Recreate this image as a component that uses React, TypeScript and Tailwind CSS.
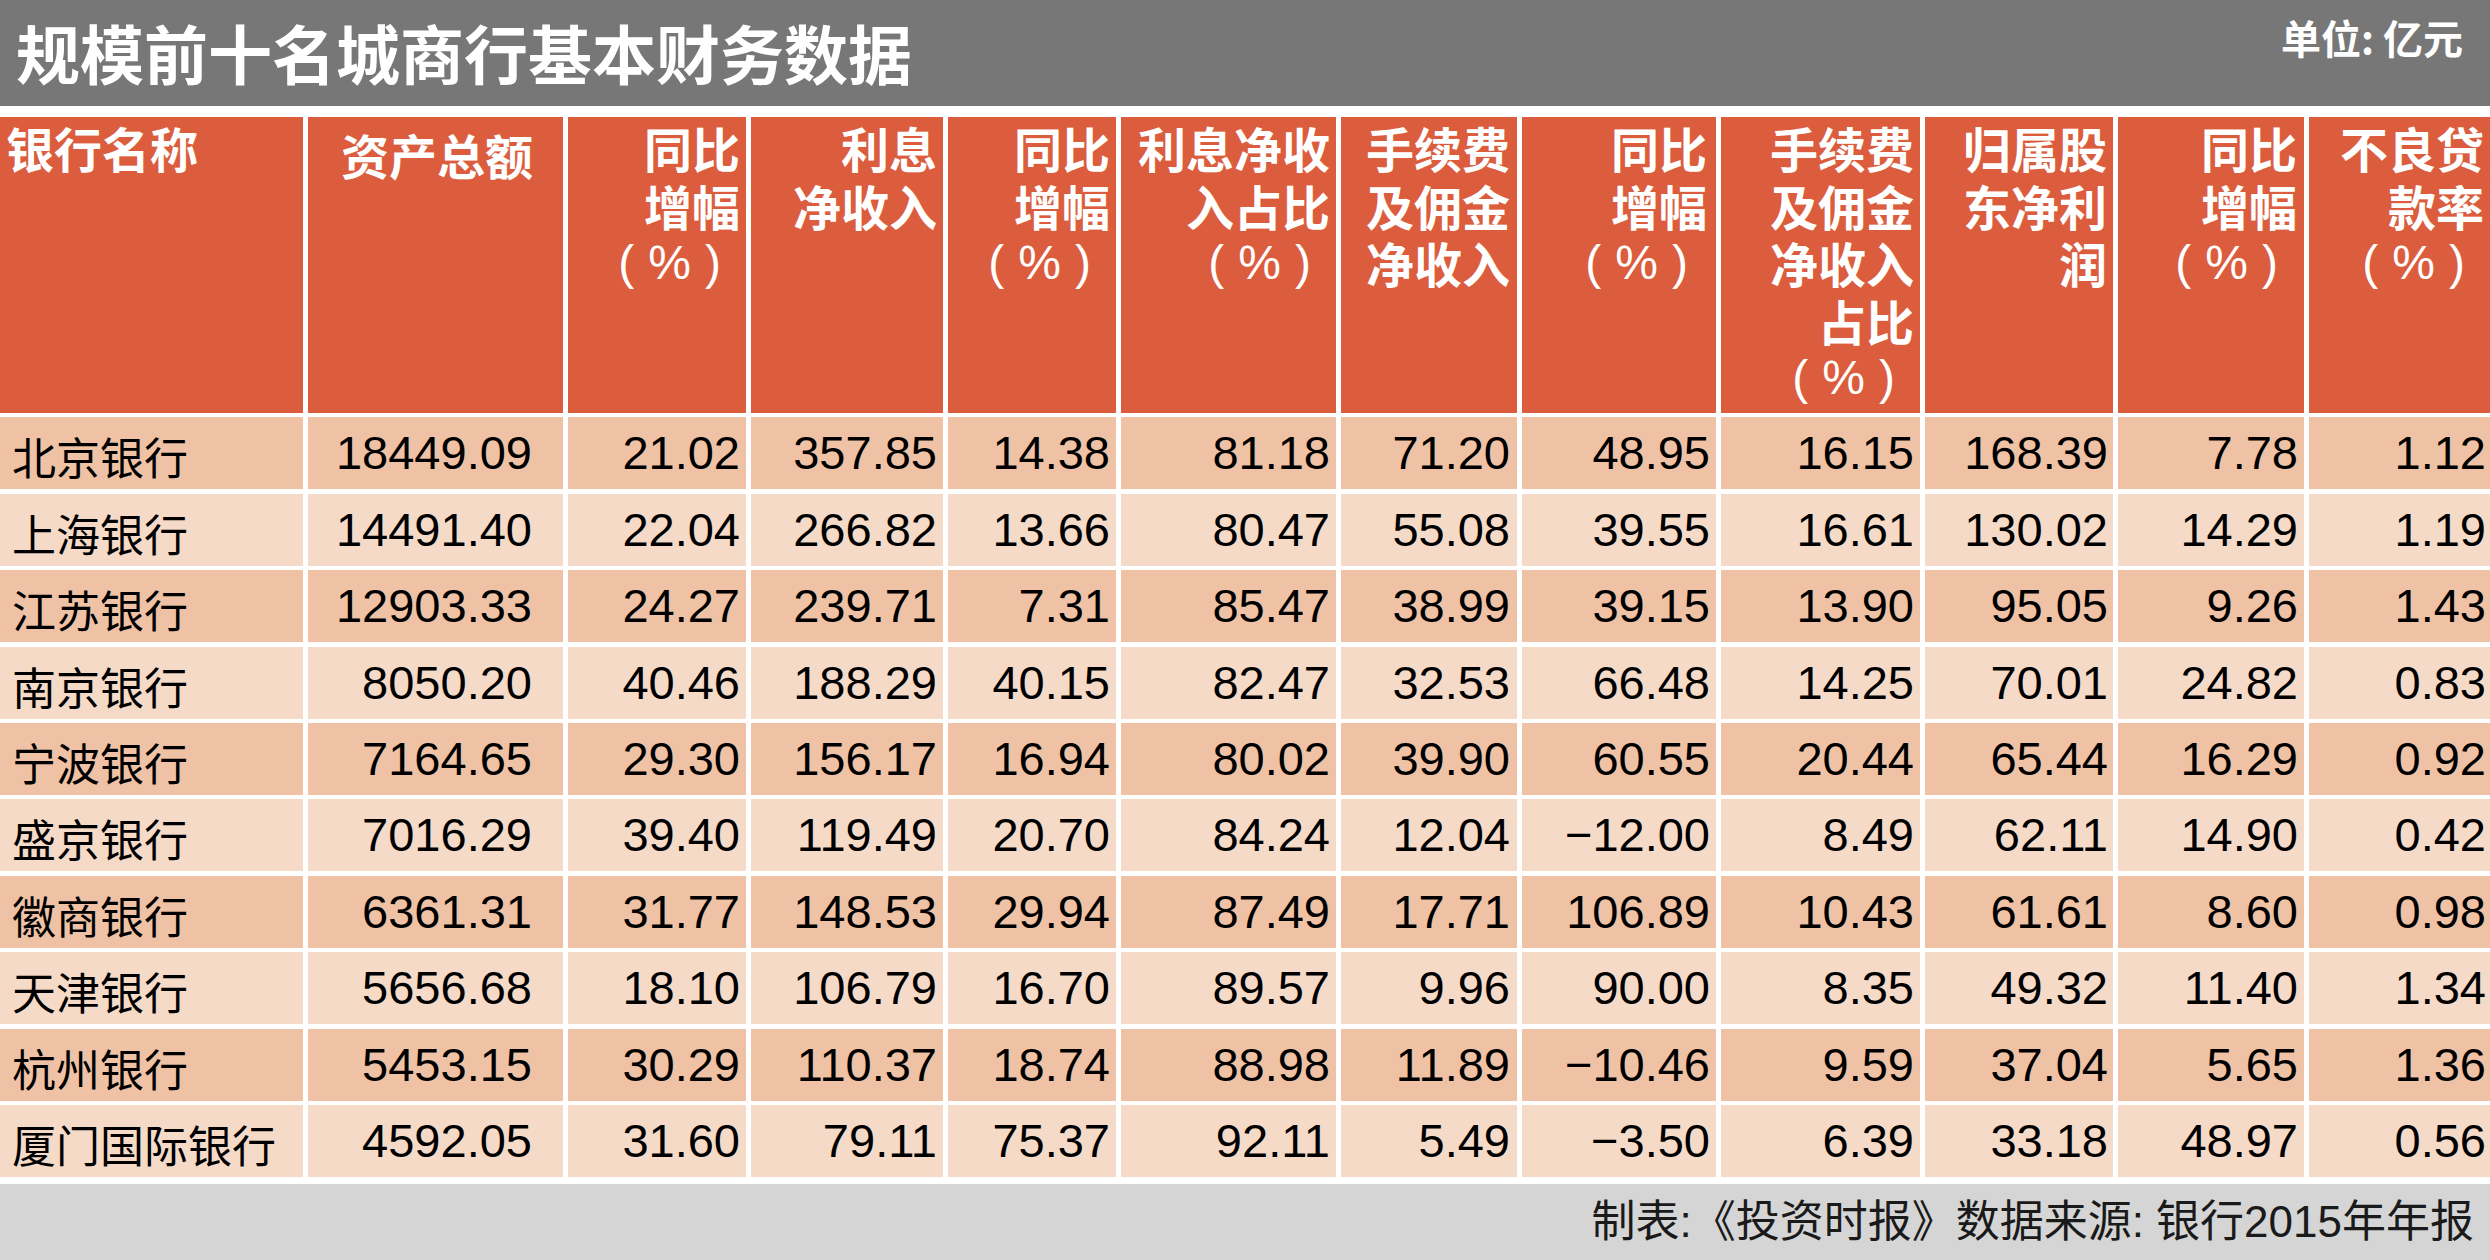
import React from "react";

type Col = {
  lines: string[];
  head: string;
  cell: string;
};

const cjk = "font-['Noto_Sans_CJK_SC',sans-serif]";
const num = "font-['Liberation_Sans','Noto_Sans_CJK_SC',sans-serif]";

// header lines + alignment per column (col 1 and col 2 are special)
const cols: Col[] = [
  { lines: ["银行名称"], head: "text-left pl-[6px] pt-[2px]", cell: "text-left pl-[12px]" },
  { lines: ["资产总额"], head: "text-right pr-[30px] pt-[9px]", cell: "text-right pr-[31px]" },
  { lines: ["同比", "增幅", "%"], head: "text-right pr-[6px] pt-[2px]", cell: "text-right pr-[6px]" },
  { lines: ["利息", "净收入"], head: "text-right pr-[6px] pt-[2px]", cell: "text-right pr-[6px]" },
  { lines: ["同比", "增幅", "%"], head: "text-right pr-[6px] pt-[2px]", cell: "text-right pr-[6px]" },
  { lines: ["利息净收", "入占比", "%"], head: "text-right pr-[6px] pt-[2px]", cell: "text-right pr-[6px]" },
  { lines: ["手续费", "及佣金", "净收入"], head: "text-right pr-[7px] pt-[2px]", cell: "text-right pr-[7px]" },
  { lines: ["同比", "增幅", "%"], head: "text-right pr-[9px] pt-[2px]", cell: "text-right pr-[6px]" },
  { lines: ["手续费", "及佣金", "净收入", "占比", "%"], head: "text-right pr-[6px] pt-[2px]", cell: "text-right pr-[6px]" },
  { lines: ["归属股", "东净利", "润"], head: "text-right pr-[6px] pt-[2px]", cell: "text-right pr-[5px]" },
  { lines: ["同比", "增幅", "%"], head: "text-right pr-[7px] pt-[2px]", cell: "text-right pr-[6px]" },
  { lines: ["不良贷", "款率", "%"], head: "text-right pr-[6px] pt-[2px]", cell: "text-right pr-[4px]" },
];

const rows: string[][] = [
  ["北京银行", "18449.09", "21.02", "357.85", "14.38", "81.18", "71.20", "48.95", "16.15", "168.39", "7.78", "1.12"],
  ["上海银行", "14491.40", "22.04", "266.82", "13.66", "80.47", "55.08", "39.55", "16.61", "130.02", "14.29", "1.19"],
  ["江苏银行", "12903.33", "24.27", "239.71", "7.31", "85.47", "38.99", "39.15", "13.90", "95.05", "9.26", "1.43"],
  ["南京银行", "8050.20", "40.46", "188.29", "40.15", "82.47", "32.53", "66.48", "14.25", "70.01", "24.82", "0.83"],
  ["宁波银行", "7164.65", "29.30", "156.17", "16.94", "80.02", "39.90", "60.55", "20.44", "65.44", "16.29", "0.92"],
  ["盛京银行", "7016.29", "39.40", "119.49", "20.70", "84.24", "12.04", "−12.00", "8.49", "62.11", "14.90", "0.42"],
  ["徽商银行", "6361.31", "31.77", "148.53", "29.94", "87.49", "17.71", "106.89", "10.43", "61.61", "8.60", "0.98"],
  ["天津银行", "5656.68", "18.10", "106.79", "16.70", "89.57", "9.96", "90.00", "8.35", "49.32", "11.40", "1.34"],
  ["杭州银行", "5453.15", "30.29", "110.37", "18.74", "88.98", "11.89", "−10.46", "9.59", "37.04", "5.65", "1.36"],
  ["厦门国际银行", "4592.05", "31.60", "79.11", "75.37", "92.11", "5.49", "−3.50", "6.39", "33.18", "48.97", "0.56"],
];

// "（ % ）" line, thin and spread out like the print version
const Percent = () => (
  <div className={`flex justify-end gap-[14px] pr-[19px] font-normal ${num}`}>
    <span>(</span>
    <span>%</span>
    <span>)</span>
  </div>
);

const HeaderCell = ({ col }: { col: Col }) => (
  <div className={`bg-[#db5d3d] text-white ${cjk} text-[48px] leading-[57.5px] ${col.head}`}>
    {col.lines.map((line, i) =>
      line === "%" ? (
        <Percent key={i} />
      ) : (
        <div key={i} className="font-bold">
          {line}
        </div>
      )
    )}
  </div>
);

const App = () => {
  return (
    <div className="w-[2490px] h-[1260px] bg-white flex flex-col overflow-hidden">
      {/* 标题栏 */}
      <div className="h-[106px] shrink-0 bg-[#777777] flex justify-between">
        <h1 className={`pl-[16px] text-white font-bold text-[64px] leading-[102px] ${cjk}`}>
          规模前十名城商行基本财务数据
        </h1>
        <div className={`pr-[27px] mt-[17px] text-white font-bold text-[40px] leading-[40px] ${cjk}`}>
          单位: 亿元
        </div>
      </div>

      <div className="mt-[11px] grid grid-cols-[303px_255px_178px_192px_168px_215px_176px_194px_199px_188px_186px_1fr] grid-rows-[296px_repeat(10,72px)] gap-x-[5px] gap-y-[4.4px]">
        {cols.map((col, i) => (
          <HeaderCell key={i} col={col} />
        ))}
        {rows.map((row, r) =>
          row.map((value, c) => (
            <div
              key={`${r}-${c}`}
              className={`${r % 2 === 0 ? "bg-[#efc2a5]" : "bg-[#f5dac8]"} text-black whitespace-nowrap ${cols[c].cell} ${
                c === 0 ? `${cjk} text-[44px] leading-[66px] pt-[6px]` : `${num} text-[47px] leading-[72px]`
              }`}
            >
              {value}
            </div>
          ))
        )}
      </div>

      {/* 来源 */}
      <div className="mt-[7px] flex-1 bg-[#d5d5d5] flex justify-end">
        <div className={`pr-[16px] text-[44px] leading-[76px] text-[#1a1a1a] ${num}`}>
          制表:《投资时报》数据来源: 银行2015年年报
        </div>
      </div>
    </div>
  );
};

export default App;
